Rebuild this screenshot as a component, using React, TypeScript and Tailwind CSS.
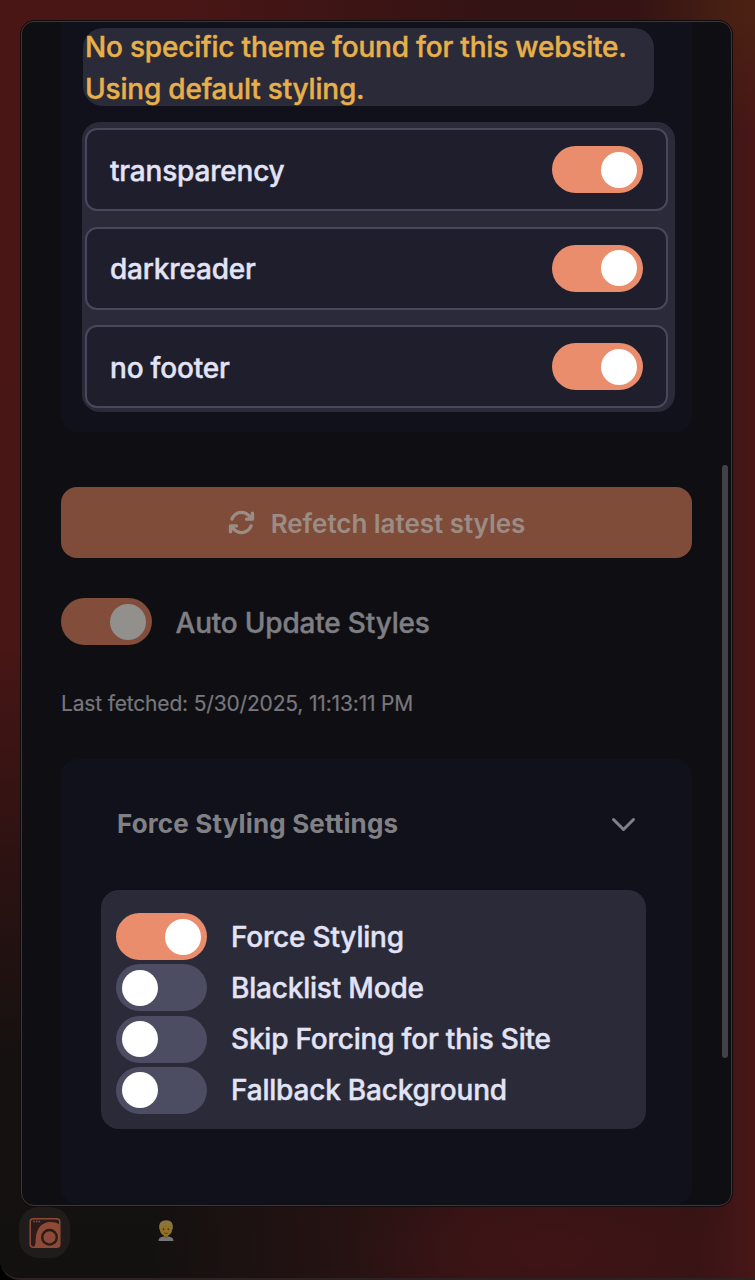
import { FaArrowsRotate } from "react-icons/fa6";

function Toggle({ on, dim }: { on: boolean; dim?: boolean }) {
  return (
    <span
      className={`flex h-[47px] w-[91px] shrink-0 items-center rounded-full px-[6px] ${
        on ? "justify-end" : "justify-start"
      } ${on ? (dim ? "bg-[#824d3a]" : "bg-[#e98d6d]") : "bg-[#4c4c63]"}`}
    >
      <span className={`size-9 rounded-full ${dim ? "bg-[#92908d]" : "bg-white"}`} />
    </span>
  );
}

function Feature({ label }: { label: string }) {
  return (
    <div className="flex h-[83px] items-center justify-between rounded-[12px] border-2 border-[#48485d] bg-[#1f1e2c] pr-[23px] pl-[23px] text-[28px] font-medium tracking-[-0.2px] text-[#e2e4f6] [-webkit-text-stroke:0.4px]">
      <span className="pt-[2px]">{label}</span>
      <Toggle on />
    </div>
  );
}

function Setting({ label, on = false }: { label: string; on?: boolean }) {
  return (
    <div className="flex h-[47px] items-center gap-6 text-[28px] leading-[47px] font-medium tracking-[-0.2px] text-[#e2e4f6] [-webkit-text-stroke:0.4px]">
      <Toggle on={on} />
      <span className="pt-px whitespace-nowrap">{label}</span>
    </div>
  );
}

function AppLogo() {
  return (
    <svg viewBox="0 0 32 32" className="size-8">
      <rect x="1.200" y="1.700" width="29.600" height="28.600" rx="3" fill="#2b1c1a" stroke="#8d4b37" strokeWidth="1.500" />
      <path d="M4.300 4.600H11.500" stroke="#8d4b37" strokeWidth="1.500" strokeDasharray="1.600 1" />
      <path d="M5.500 30C7.500 24 6 21 8 15C10.500 7.500 16 5 22 5C26 5 29 6 30.500 8V28.500Q30.500 30 29 30Z" fill="#8d4b37" />
      <circle cx="20.500" cy="20.300" r="7.300" fill="#8d4b37" stroke="#2b1b19" strokeWidth="2.400" />
    </svg>
  );
}

function Person() {
  return (
    <svg viewBox="0 0 16 21" className="h-[21px] w-4">
      <path d="M0.500 21C0.500 17.500 3 16.800 5.500 16.400H10.500C13 16.800 15.500 17.500 15.500 21Z" fill="#77757a" />
      <path d="M6 14H10V17.300Q8 18.800 6 17.300Z" fill="#80601f" />
      <ellipse cx="8" cy="9" rx="6.200" ry="7.200" fill="#917126" />
      <path d="M1.300 9C0.500 3 3.500 0.300 8.200 0.300S15.500 3 14.700 9L13.500 10.500L12.700 6.500C9.500 7 6.500 5.500 5.500 4.500C5.500 6 4 7 3 7.500L2.500 10.500Z" fill="#8b743d" />
      <path d="M6.400 13Q8 14 9.600 13" stroke="#5d451a" strokeWidth="1" fill="none" />
      <circle cx="5.600" cy="9.200" r="0.800" fill="#30220c" />
      <circle cx="10.400" cy="9.200" r="0.800" fill="#30220c" />
    </svg>
  );
}

export default function App() {
  return (
    <div className="h-[1280px] w-[755px] overflow-hidden bg-black font-['Inter',sans-serif] [font-optical-sizing:none]">
      <div className="flex h-[1280px] w-[755px] flex-col rounded-bl-[20px] border-b-2 border-[#2c2223] bg-[radial-gradient(ellipse_200px_80px_at_550px_1250px,#401416_0%,#40141600_100%),radial-gradient(ellipse_120px_130px_at_755px_10px,#4a2212_0%,#4a221200_100%),linear-gradient(to_right,#34131400_0%,#34131400_20%,#341314_65%,#361314_92%,#481617_100%),linear-gradient(to_bottom,#4a1615_0%,#481615_50%,#2c1212_68%,#161110_82%,#131110_100%)] pt-5 pl-5">
        <div className="h-[1187px] w-[713px] shrink-0 rounded-[14px] border border-[#130c0d] bg-[#0f0e13] shadow-[0_-20px_0_0_#49161500]">
          <div className="flex h-full w-full justify-between overflow-hidden rounded-[13px] border border-[#463433] pr-[3px] pl-[39px]">
            <main className="flex w-[631px] flex-col">
              <section className="h-[410px] shrink-0 rounded-b-[16px] bg-[#11111c] px-[21px] pt-[6px]">
                <p className="ml-px flex h-[78px] w-[571px] flex-col justify-center rounded-[20px] bg-[#2b2a39] pt-[3px] pl-[2px] text-[28px] leading-[41.500px] font-medium tracking-[-0.2px] text-[#e7b04a] [-webkit-text-stroke:0.4px]">
                  <span className="whitespace-nowrap">No specific theme found for this website.</span>
                  <span className="whitespace-nowrap">Using default styling.</span>
                </p>
                <div className="mt-4 flex h-[290px] w-[593px] flex-col gap-[15.500px] rounded-[18px] bg-[#2b2a39] pt-[6px] pr-[7px] pl-[3px]">
                  <Feature label="transparency" />
                  <Feature label="darkreader" />
                  <Feature label="no footer" />
                </div>
              </section>
              <button className="mt-[55px] flex h-[71px] shrink-0 items-center justify-center gap-4 rounded-[16px] bg-[#7f4c39] text-[26px] font-semibold text-[#9b8d85]">
                <FaArrowsRotate className="size-[27px]" />
                <span className="pt-[2px] tracking-[-0.03px]">Refetch latest styles</span>
              </button>
              <div className="mt-10 flex h-[47px] shrink-0 items-center gap-[23.500px] text-[28px] font-medium tracking-[-0.2px] text-[#7e7e83] [-webkit-text-stroke:0.4px]">
                <Toggle on dim />
                <span className="pt-[2px]">Auto Update Styles</span>
              </div>
              <p className="mt-[43px] h-8 shrink-0 text-[21px] leading-8 tracking-[-0.17px] text-[#77777c] [-webkit-text-stroke:0.2px]">
                Last fetched: 5/30/2025, 11:13:11 PM
              </p>
              <section className="mt-[39px] h-[445px] shrink-0 rounded-[16px] bg-[#11111c] pr-[46px] pl-10">
                <header className="flex h-[131px] items-center justify-between pr-[8px] pl-4 text-[26px] font-bold text-[#808085]">
                  <h2 className="pb-[2px] tracking-[0.15px]">Force Styling Settings</h2>
                  <svg viewBox="0 0 28 28" className="size-7" fill="none" stroke="currentColor" strokeWidth="3" strokeLinecap="round" strokeLinejoin="round">
                    <path d="M3.500 8.500L13.500 18.500L23.500 8.500" />
                  </svg>
                </header>
                <div className="flex h-[239px] flex-col gap-[4.300px] rounded-[18px] bg-[#2b2a39] pt-[23px] pl-[15px]">
                  <Setting label="Force Styling" on />
                  <Setting label="Blacklist Mode" />
                  <Setting label="Skip Forcing for this Site" />
                  <Setting label="Fallback Background" />
                </div>
              </section>
            </main>
            <div className="mt-[443px] h-[593px] w-[6px] rounded-full bg-[#424147]" />
          </div>
        </div>
        <footer className="-ml-px flex items-start">
          <div className="flex size-[51px] items-center justify-center rounded-[20px] bg-[#1f1c1b]">
            <AppLogo />
          </div>
          <div className="mt-[13px] ml-[88px]">
            <Person />
          </div>
        </footer>
      </div>
    </div>
  );
}
